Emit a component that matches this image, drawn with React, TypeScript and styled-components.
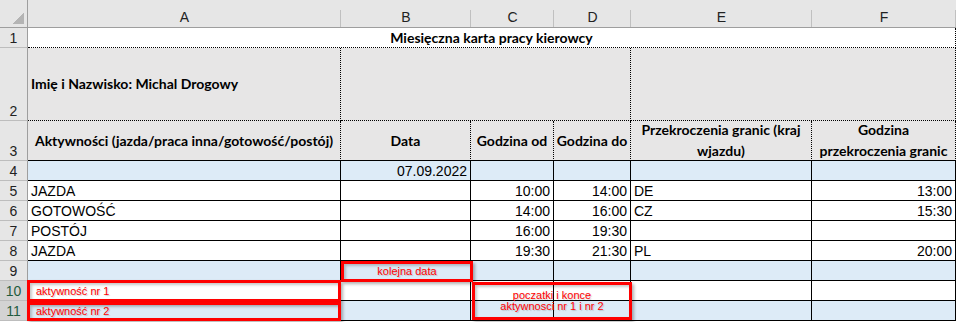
import React from 'react';
import styled, { createGlobalStyle } from 'styled-components';

type Line = 'none' | 'dot' | 'solid';

const GlobalStyle = createGlobalStyle`
  html, body {
    margin: 0;
    padding: 0;
    background: #ffffff;
  }
  * {
    box-sizing: border-box;
  }
`;

const line = (l?: Line) =>
  l === 'dot' ? '1px dotted #000' : l === 'solid' ? '1px solid #000' : 'none';

const Sheet = styled.div`
  display: grid;
  grid-template-columns: 28px 313px 130px 83px 77px 181px 144px;
  grid-template-rows: 28px 20px 73px 40px repeat(8, 20px);
  width: 957px;
  height: 322px;
  background: #ffffff;
  font-family: 'Liberation Sans', Arial, sans-serif;
  color: #000;
`;

const Corner = styled.div`
  grid-row: 1;
  grid-column: 1;
  position: relative;
  background: #e6e6e6;
  border-right: 1px solid #9e9e9e;
  border-bottom: 1px solid #9e9e9e;

  &::before {
    content: '';
    position: absolute;
    right: 3px;
    bottom: 3px;
    width: 11px;
    height: 11px;
    background: linear-gradient(135deg, transparent 50%, #b4b4b4 50%);
  }
`;

const ColHead = styled.div<{ $c: number }>`
  grid-row: 1;
  grid-column: ${p => p.$c};
  position: relative;
  display: flex;
  align-items: flex-end;
  justify-content: center;
  padding-bottom: 2px;
  background: #e6e6e6;
  border-bottom: 1px solid #9e9e9e;
  font-size: 14px;
  color: #222;

  &::after {
    content: '';
    position: absolute;
    right: 0;
    top: 10px;
    bottom: 0;
    width: 1px;
    background: #c0c0c0;
  }
`;

const RowHead = styled.div<{ $r: number; $sel?: boolean }>`
  grid-row: ${p => p.$r};
  grid-column: 1;
  display: flex;
  align-items: flex-end;
  justify-content: center;
  padding-bottom: 1px;
  background: ${p => (p.$sel ? '#d3d3d3' : '#e6e6e6')};
  border-right: 1px solid #9e9e9e;
  border-bottom: 1px solid #bdbdbd;
  font-size: 14px;
  color: ${p => (p.$sel ? '#1f5c3f' : '#222')};
`;

const TitleCell = styled.div`
  grid-row: 2;
  grid-column: 2 / span 6;
  display: flex;
  align-items: flex-end;
  justify-content: center;
  padding-bottom: 1px;
  background: #ffffff;
  border-bottom: 1px dotted #000;
  border-right: 1px dotted #000;
  font-family: Lato, 'Noto Sans', sans-serif;
  font-weight: 700;
  font-size: 14px;
`;

const HeadCell = styled.div<{
  $r: number;
  $c: number;
  $cs?: number;
  $bottom?: Line;
  $align?: 'flex-start' | 'center';
}>`
  grid-row: ${p => p.$r};
  grid-column: ${p => p.$c} / span ${p => p.$cs ?? 1};
  display: flex;
  align-items: center;
  justify-content: ${p => p.$align ?? 'center'};
  padding: 0 3px 1px;
  background: #e7e6e6;
  border-right: 1px dotted #000;
  border-bottom: ${p => line(p.$bottom ?? 'dot')};
  font-family: Lato, 'Noto Sans', sans-serif;
  font-weight: 700;
  font-size: 14px;
  line-height: 21px;
  text-align: center;
  white-space: nowrap;
`;

const DataCell = styled.div<{ $r: number; $c: number; $blue?: boolean; $right?: boolean }>`
  grid-row: ${p => p.$r};
  grid-column: ${p => p.$c};
  display: flex;
  align-items: flex-end;
  justify-content: ${p => (p.$right ? 'flex-end' : 'flex-start')};
  padding: 0 3px 1px;
  background: ${p => (p.$blue ? '#ddebf7' : '#ffffff')};
  border-right: 1px solid #000;
  border-bottom: 1px solid #000;
  font-size: 14px;
  white-space: nowrap;
  overflow: hidden;
`;

const Callout = styled.div<{
  $r: number;
  $c: number;
  $rs?: number;
  $cs?: number;
  $m: string;
  $left?: boolean;
}>`
  grid-row: ${p => p.$r} / span ${p => p.$rs ?? 1};
  grid-column: ${p => p.$c} / span ${p => p.$cs ?? 1};
  margin: ${p => p.$m};
  z-index: 2;
  display: flex;
  flex-direction: column;
  align-items: ${p => (p.$left ? 'flex-start' : 'center')};
  justify-content: center;
  padding: ${p => (p.$left ? '0 0 0 6px' : '0')};
  border: 3px solid #ff0000;
  box-shadow: 2px 2px 3px rgba(0, 0, 0, 0.3), inset 2px 2px 3px rgba(0, 0, 0, 0.22);
  color: #ff0000;
  font-size: 11px;
  line-height: 11px;
  text-shadow: 1px 1px 1px rgba(0, 0, 0, 0.18);
  white-space: nowrap;
`;

const letters = ['A', 'B', 'C', 'D', 'E', 'F'];

type DataRow = { n: number; blue?: boolean; v: string[] };

const dataRows: DataRow[] = [
  { n: 4, blue: true, v: ['', '07.09.2022', '', '', '', ''] },
  { n: 5, v: ['JAZDA', '', '10:00', '14:00', 'DE', '13:00'] },
  { n: 6, v: ['GOTOWOŚĆ', '', '14:00', '16:00', 'CZ', '15:30'] },
  { n: 7, v: ['POSTÓJ', '', '16:00', '19:30', '', ''] },
  { n: 8, v: ['JAZDA', '', '19:30', '21:30', 'PL', '20:00'] },
  { n: 9, blue: true, v: ['', '', '', '', '', ''] },
  { n: 10, v: ['', '', '', '', '', ''] },
  { n: 11, blue: true, v: ['', '', '', '', '', ''] },
];

// columns holding numbers / dates are right aligned
const rightCols = [1, 2, 3, 5];

export default function App() {
  return (
    <>
      <GlobalStyle />
      <Sheet>
        <Corner />
        {letters.map((l, i) => (
          <ColHead key={l} $c={i + 2}>
            {l}
          </ColHead>
        ))}
        {Array.from({ length: 11 }, (_, i) => (
          <RowHead key={i} $r={i + 2} $sel={i + 1 >= 10}>
            {i + 1}
          </RowHead>
        ))}

        <TitleCell>Miesięczna karta pracy kierowcy</TitleCell>

        <HeadCell $r={3} $c={2} $align="flex-start">
          Imię i Nazwisko: Michal Drogowy
        </HeadCell>
        <HeadCell $r={3} $c={3} $cs={3} />
        <HeadCell $r={3} $c={6} $cs={2} />

        <HeadCell $r={4} $c={2} $bottom="solid">
          Aktywności (jazda/praca inna/gotowość/postój)
        </HeadCell>
        <HeadCell $r={4} $c={3} $bottom="solid">
          Data
        </HeadCell>
        <HeadCell $r={4} $c={4} $bottom="solid">
          Godzina od
        </HeadCell>
        <HeadCell $r={4} $c={5} $bottom="solid">
          Godzina do
        </HeadCell>
        <HeadCell $r={4} $c={6} $bottom="solid">
          Przekroczenia granic (kraj
          <br />
          wjazdu)
        </HeadCell>
        <HeadCell $r={4} $c={7} $bottom="solid">
          Godzina
          <br />
          przekroczenia granic
        </HeadCell>

        {dataRows.map(row =>
          row.v.map((val, ci) => (
            <DataCell
              key={`${row.n}-${ci}`}
              $r={row.n + 1}
              $c={ci + 2}
              $blue={row.blue}
              $right={rightCols.includes(ci)}
            >
              {val}
            </DataCell>
          ))
        )}

        <Callout $r={10} $c={3} $m="0 -2px -1px 0">
          kolejna data
        </Callout>
        <Callout $r={11} $c={2} $m="-1px 0 -1px -1px" $left>
          aktywność nr 1
        </Callout>
        <Callout $r={12} $c={2} $m="1px 0 0 -1px" $left>
          aktywność nr 2
        </Callout>
        <Callout $r={11} $c={4} $rs={2} $cs={2} $m="1px -1px 1px 1px">
          <span>poczatki i konce</span>
          <span>aktywnosci nr 1 i nr 2</span>
        </Callout>
      </Sheet>
    </>
  );
}
